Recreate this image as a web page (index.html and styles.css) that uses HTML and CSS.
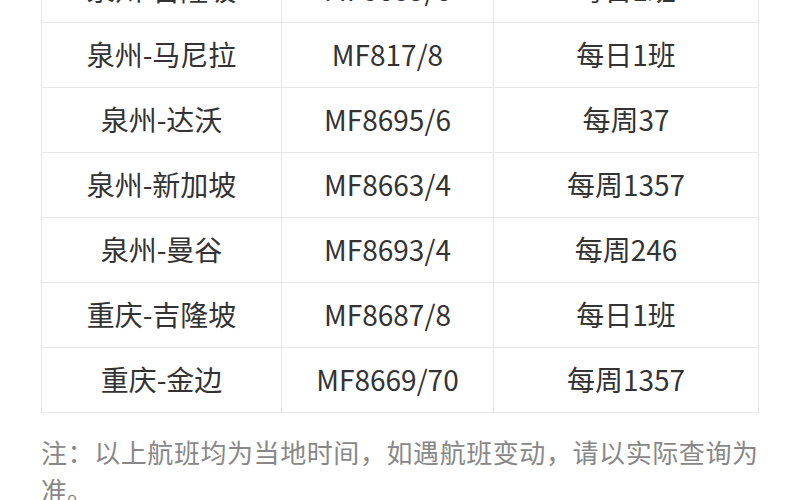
FILE: index.html
```html
<!DOCTYPE html>
<html lang="zh-CN">
<head>
<meta charset="utf-8">
<link rel="stylesheet" href="styles.css">
</head>
<body>
<div class="page">
  <table class="flights">
    <colgroup>
      <col class="c1"><col class="c2"><col class="c3">
    </colgroup>
    <tbody>
      <tr><td>泉州-吉隆坡</td><td>MF8685/6</td><td>每日1班</td></tr>
      <tr><td>泉州-马尼拉</td><td>MF817/8</td><td>每日1班</td></tr>
      <tr><td>泉州-达沃</td><td>MF8695/6</td><td>每周37</td></tr>
      <tr><td>泉州-新加坡</td><td>MF8663/4</td><td>每周1357</td></tr>
      <tr><td>泉州-曼谷</td><td>MF8693/4</td><td>每周246</td></tr>
      <tr><td>重庆-吉隆坡</td><td>MF8687/8</td><td>每日1班</td></tr>
      <tr><td>重庆-金边</td><td>MF8669/70</td><td>每周1357</td></tr>
    </tbody>
  </table>
  <p class="note">注：以上航班均为当地时间，如遇航班变动，请以实际查询为准。</p>
</div>
</body>
</html>
```
FILE: styles.css
```css
html, body {
  margin: 0;
  padding: 0;
  background: #ffffff;
}
body {
  font-family: "Noto Sans CJK SC", "Noto Sans", sans-serif;
  overflow: hidden;
}
.page {
  padding-left: 41px;
  width: 717px;
}
.flights {
  margin-top: -43px;
  width: 717px;
  border-collapse: collapse;
  table-layout: fixed;
}
.c1 { width: 240px; }
.c2 { width: 212px; }
.c3 { width: 265px; }
.flights td {
  height: 62px;
  padding: 0 0 2px 0;
  border: 1px solid #e8e8e8;
  text-align: center;
  vertical-align: middle;
  font-size: 28px;
  color: #333333;
  line-height: 30px;
}
.note {
  margin: 20px 0 0 0;
  font-size: 26px;
  line-height: 38px;
  color: #888888;
  text-align: justify;
}
```
